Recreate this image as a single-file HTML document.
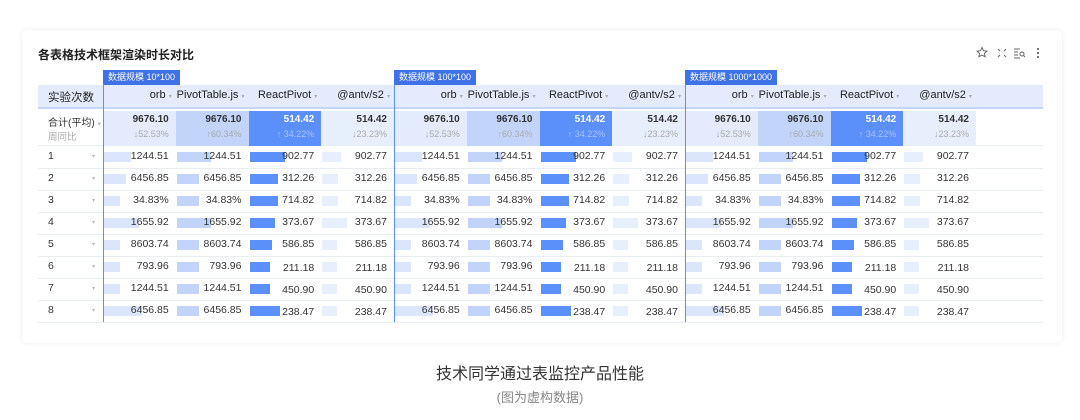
<!DOCTYPE html>
<html><head><meta charset="utf-8"><style>
*{margin:0;padding:0;box-sizing:border-box}
body{width:1080px;height:420px;background:#fff;font-family:"Liberation Sans","Noto Sans CJK SC",sans-serif;position:relative;overflow:hidden;color:#333}
.card{position:absolute;left:22px;top:30px;width:1040px;height:313px;background:#fff;border-radius:6px;box-shadow:0 0 6px rgba(0,0,0,.08)}
.a{position:absolute;white-space:nowrap}
.t{font-size:10.5px;color:#333}
.r{text-align:right}
</style></head><body>
<div class="card"></div>
<div class="a" style="left:38px;top:46px;font-size:12px;font-weight:bold;color:#222">各表格技术框架渲染时长对比</div>
<svg class="a" style="left:976px;top:46px" width="70" height="14" viewBox="0 0 70 14" fill="none" stroke="#666" stroke-width="1">
<path d="M6 1.5l1.5 3.2 3.4.4-2.5 2.3.7 3.4L6 9.1 2.9 10.8l.7-3.4L1.1 5.1l3.4-.4z"/>
<path d="M22 3l2 2M22 11l2-2M30 3l-2 2M30 11l-2-2"/>
<path d="M38 3h6M38 6h4M38 9h4M38 12h6"/><circle cx="46" cy="8" r="2"/><path d="M47.5 9.5l1.5 1.5"/>
<circle cx="62" cy="3" r=".6" fill="#666"/><circle cx="62" cy="7" r=".6" fill="#666"/><circle cx="62" cy="11" r=".6" fill="#666"/>
</svg>
<div id="tb"></div>
<div class="a" style="left:0;width:1080px;top:360px;text-align:center;font-size:16px;color:#333">技术同学通过表监控产品性能</div>
<div class="a" style="left:0;width:1080px;top:387px;text-align:center;font-size:13px;color:#888">(图为虚构数据)</div>
<script>
var h='';
function d(s){h+=s}
d('<div class="a" style="left:38px;top:85px;width:1005px;height:24px;background:#e3ebfc;border-bottom:2px solid #c5d5f8"></div>');
d('<div class="a" style="left:48px;top:89px;font-size:11.5px;color:#222">实验次数</div>');
d('<div class="a" style="left:48px;top:114px;font-size:10px;color:#333">合计(平均) <span style="color:#bbb;font-size:7px">▾</span></div>');
d('<div class="a" style="left:48px;top:129px;font-size:9.5px;color:#aaa">周同比</div>');
var rows=[['1244.51','1244.51','902.77','902.77',[27,34,35,19]],['6456.85','6456.85','312.26','312.26',[22,22,28,16]],['34.83%','34.83%','714.82','714.82',[16,22,28,16]],['1655.92','1655.92','373.67','373.67',[35,34,25,25]],['8603.74','8603.74','586.85','586.85',[16,22,22,15]],['793.96','793.96','211.18','211.18',[16,22,20,15]],['1244.51','1244.51','450.90','450.90',[16,22,20,15]],['6456.85','6456.85','238.47','238.47',[38,22,30,15]]];
for(var i=0;i<8;i++){var y=146+i*22;
d('<div class="a" style="left:38px;top:'+(y+22)+'px;width:1005px;height:1px;background:#e8ecf3"></div>');
d('<div class="a t" style="left:48px;top:'+(y+4)+'px">'+(i+1)+'</div><div class="a" style="left:92px;top:'+(y+7)+'px;font-size:6px;color:#bbb">▾</div>');}
d('<div class="a" style="left:38px;top:145px;width:1005px;height:1px;background:#e8ecf3"></div>');
var gl=['数据规模 10*100','数据规模 100*100','数据规模 1000*1000'];
var cn=['orb','PivotTable.js','ReactPivot','@antv/s2'];
var bg=['#e3ebfc','#c2d4fa','#5b8ff9','#e8effc'];
var bc=['#dbe6fc','#c2d4fa','#5b8ff9','#e8effc'];
var tv=['9676.10','9676.10','514.42','514.42'],tp=['↓52.53%','↑60.34%','↑ 34.22%','↓23.23%'];
for(var g=0;g<3;g++){var x0=103+g*291;
d('<div class="a" style="left:'+x0+'px;top:70px;height:15px;padding:0 5px;background:#3f72e6;color:#fff;font-size:9px;line-height:15px">'+gl[g]+'</div>');
d('<div class="a" style="left:'+x0+'px;top:84px;width:1px;height:238px;background:#5b8ff9"></div>');
for(var c=0;c<4;c++){var cx=x0+c*72.75,w=72.75;
d('<div class="a r" style="left:'+cx+'px;width:'+(w-4)+'px;top:89px;font-size:11px;color:#222">'+cn[c]+' <span style="color:#aaa;font-size:6px">▾</span></div>');
d('<div class="a" style="left:'+(cx+(c==0?1:0))+'px;top:111px;width:'+w+'px;height:35px;background:'+bg[c]+'"></div>');
var wc=c==2?'#fff':'#333',pc=c==2?'#a9c3fb':'#aaa';
d('<div class="a r" style="left:'+cx+'px;width:'+(w-7)+'px;top:114px;font-size:10px;font-weight:bold;color:'+wc+'">'+tv[c]+'</div>');
d('<div class="a r" style="left:'+cx+'px;width:'+(w-7)+'px;top:129px;font-size:9px;color:'+pc+'">'+tp[c]+'</div>');
for(var i=0;i<8;i++){var y=146+i*22;
d('<div class="a" style="left:'+(cx+1)+'px;top:'+(y+6)+'px;width:'+rows[i][4][c]+'px;height:10px;background:'+bc[c]+'"></div>');
d('<div class="a r t" style="left:'+cx+'px;width:'+(w-7)+'px;top:'+(y+(c>=2&&i>=5?6:4))+'px">'+rows[i][c]+'</div>');}
}}
document.getElementById('tb').innerHTML=h;
</script>
</body></html>
